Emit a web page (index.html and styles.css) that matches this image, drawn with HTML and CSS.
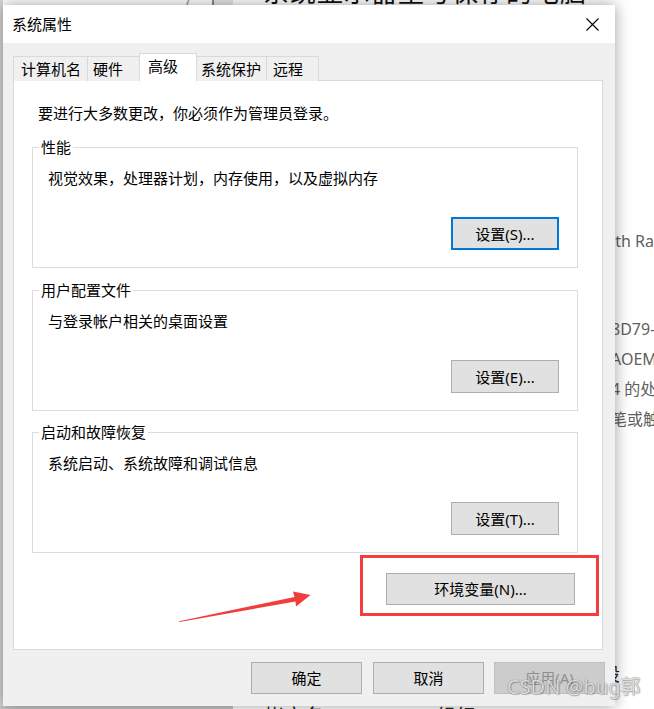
FILE: index.html
```html
<!DOCTYPE html>
<html lang="zh-CN">
<head>
<meta charset="utf-8">
<title>系统属性</title>
<link rel="stylesheet" href="styles.css">
</head>
<body>
<div class="desk-left"></div>
<div class="desk-top">
  <span class="desk-slash">/</span>
  <span class="desk-sep"></span>
  <span class="desk-head">系统显示器型号保存的电脑</span>
</div>
<div class="desk-right">
  <p class="dr first">ith Ra</p>
  <p class="dr">8D79-</p>
  <p class="dr">AOEM</p>
  <p class="dr">4 的处</p>
  <p class="dr">笔或触</p>
</div>
<div class="desk-char">设</div>
<div class="desk-bottom">
  <span class="db-bar"></span>
  <span class="db-a">帐户名</span>
  <span class="db-b">组织</span>
</div>

<div class="dialog">
  <div class="titlebar">
    <span class="title">系统属性</span>
    <svg class="close" viewBox="0 0 13 13" width="13" height="13"><path d="M0.5 0.5 L12.5 12.5 M12.5 0.5 L0.5 12.5" stroke="#000" stroke-width="1.1" fill="none"/></svg>
  </div>
  <div class="body">
    <div class="tabs">
      <div class="tab t1">计算机名</div>
      <div class="tab t2">硬件</div>
      <div class="tab t3 active">高级</div>
      <div class="tab t4">系统保护</div>
      <div class="tab t5">远程</div>
    </div>
    <div class="panel">
      <p class="note">要进行大多数更改，你必须作为管理员登录。</p>
      <div class="group g1">
        <div class="legend">性能</div>
        <p class="desc">视觉效果，处理器计划，内存使用，以及虚拟内存</p>
        <div class="btn-row"><button class="btn focus">设置(S)...</button></div>
      </div>
      <div class="group g2">
        <div class="legend">用户配置文件</div>
        <p class="desc">与登录帐户相关的桌面设置</p>
        <div class="btn-row"><button class="btn">设置(E)...</button></div>
      </div>
      <div class="group g3">
        <div class="legend">启动和故障恢复</div>
        <p class="desc">系统启动、系统故障和调试信息</p>
        <div class="btn-row"><button class="btn">设置(T)...</button></div>
      </div>
      <div class="env-row"><button class="btn env">环境变量(N)...</button></div>
    </div>
    <div class="footer">
      <button class="btn fbtn ok">确定</button>
      <button class="btn fbtn">取消</button>
      <button class="btn fbtn disabled">应用(A)</button>
    </div>
  </div>
</div>

<svg class="annot" viewBox="0 0 654 709" width="654" height="709">
  <rect x="361.5" y="556.5" width="236" height="58" fill="none" stroke="#f53d3d" stroke-width="3"/>
  <polygon points="179,621.2 294.5,597 293,591.5 310.5,595 296,606.5 295.5,601.5 179.5,622" fill="#f23d3d"/>
</svg>

<div class="watermark">CSDN @bug郭</div>
</body>
</html>
```

FILE: styles.css
```css
* { box-sizing: border-box; }
html, body { margin: 0; padding: 0; }
body {
  width: 654px;
  height: 709px;
  position: relative;
  overflow: hidden;
  background: #ffffff;
  font-family: "Noto Sans", "Noto Sans CJK SC", sans-serif;
  font-size: 15px;
  color: #000;
}
p { margin: 0; }

/* ---- desktop behind the window ---- */
.desk-left {
  position: absolute; left: 0; top: 0;
  width: 3px; height: 709px;
  background: #d6d6d6;
}
.desk-top {
  position: absolute; left: 160px; top: 0;
  width: 494px; height: 8px;
  overflow: hidden;
}
.desk-slash {
  position: absolute; left: 26px; top: -12px;
  font-size: 16px; color: #999;
}
.desk-sep {
  position: absolute; left: 52px; top: 0;
  width: 21px; height: 8px;
  border-left: 2px solid #8a8a8a;
  background: #e6e6e6;
}
.desk-head {
  position: absolute; left: 103px; top: -23px;
  font-size: 26px; line-height: 30px;
  white-space: nowrap; color: #111;
  letter-spacing: 1px;
}
.desk-right {
  position: absolute; left: 611px; top: 226px;
  font-size: 16px; line-height: 30px; color: #5f5f5f;
  white-space: nowrap;
}
.dr.first { margin-bottom: 58px; }
.desk-char {
  position: absolute; left: 602px; top: 663px;
  font-size: 18px; line-height: 22px; color: #222;
}
.desk-bottom {
  position: absolute; left: 0; top: 706px;
  width: 654px; height: 3px; overflow: hidden;
}
.db-bar {
  position: absolute; left: 0; top: 0;
  width: 233px; height: 3px; background: #c8c8c8;
}
.db-a, .db-b {
  position: absolute; top: -1px;
  font-size: 20px; line-height: 24px; color: #222;
}
.db-a { left: 264px; }
.db-b { left: 436px; }

/* ---- dialog window ---- */
.dialog {
  position: absolute; left: 3px; top: 5px;
  width: 612px; height: 701px;
  display: flex; flex-direction: column;
  box-shadow: 0 0 14px rgba(0, 0, 0, 0.38);
  z-index: 2;
}
.titlebar {
  height: 38px; flex: none;
  background: #fff;
  display: flex; align-items: center; justify-content: space-between;
  padding: 0 16px 0 9px;
}
.title { font-size: 15px; line-height: 20px; }
.close { display: block; margin-top: 1px; }

.body {
  flex: 1;
  background: #f0f0f0;
  padding: 10px 12px 12px 10px;
  display: flex; flex-direction: column;
}
.tabs {
  height: 28px; flex: none;
  display: flex; align-items: flex-end;
  margin-bottom: -1px;
  position: relative; z-index: 1;
}
.tab {
  height: 25px;
  border: 1px solid #d9d9d9; border-bottom: none;
  background: #f0f0f0;
  line-height: 24px;
  white-space: nowrap;
  margin-left: -1px;
}
.tab.active { height: 28px; background: #fff; }
.t1 { width: 75px; margin-left: 0; padding-left: 7px; }
.t2 { width: 53px; padding-left: 5px; }
.t3 { width: 58px; padding-left: 8px; }
.t4 { width: 71px; padding-left: 4px; }
.t5 { width: 53px; padding-left: 6px; }

.panel {
  flex: none;
  width: 590px; height: 570px;
  background: #fff;
  border: 1px solid #d9d9d9;
}
.note { margin: 22px 0 0 24px; line-height: 20px; }

.group {
  width: 546px; height: 121px;
  margin: 24px 0 0 18px;
  border: 1px solid #dcdcdc;
}
.g2 { margin-top: 22px; }
.g3 { margin-top: 21px; }
.legend {
  width: fit-content;
  margin: -11px 0 0 6px;
  padding: 0 2px;
  background: #fff;
  line-height: 20px;
}
.desc { margin: 11px 0 0 15px; line-height: 20px; }
.btn-row {
  display: flex; justify-content: flex-end;
  margin: 29px 18px 0 0;
}

.btn {
  display: block;
  width: 108px; height: 33px;
  padding: 0; margin: 0;
  background: #e1e1e1;
  border: 1px solid #adadad;
  font-family: inherit; font-size: 15px; color: #000;
  line-height: 30px; text-align: center;
  white-space: nowrap;
}
.btn.focus { border: 2px solid #0078d7; line-height: 28px; }

.env-row { margin: 20px 0 0 372px; }
.btn.env { width: 189px; height: 32px; line-height: 29px; }

.footer {
  display: flex; justify-content: flex-end; gap: 10px;
  margin: 12px -2px 0 0;
}
.fbtn { width: 111px; height: 32px; line-height: 29px; }
.fbtn.ok { margin-right: 1px; }
.fbtn.disabled {
  background: #cccccc;
  border-color: #bfbfbf;
  color: #8f8f8f;
}

/* ---- overlays ---- */
.annot {
  position: absolute; left: 0; top: 0;
  z-index: 3; pointer-events: none;
}
.watermark {
  position: absolute; left: 507px; top: 674px;
  z-index: 4;
  font-size: 20px; line-height: 26px;
  white-space: nowrap;
  color: rgba(255, 255, 255, 0.8);
  text-shadow: 0 0 1px rgba(0, 0, 0, 0.6), 1px 1px 1px rgba(0, 0, 0, 0.22);
}
```
